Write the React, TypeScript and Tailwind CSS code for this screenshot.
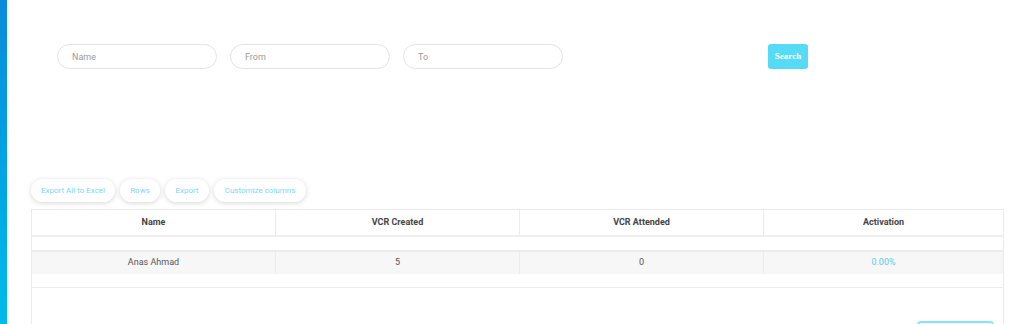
import React from "react";

const cols = ["Name", "VCR Created", "VCR Attended", "Activation"];

const tools = [
  { label: "Export All to Excel", w: "w-[84px]" },
  { label: "Rows", w: "w-[40px]" },
  { label: "Export", w: "w-[44px]" },
  { label: "Customize columns", w: "w-[92px]" },
];

export default function App() {
  return (
    <div className="flex h-[324px] w-[1024px] overflow-hidden bg-white font-['Roboto',sans-serif]">
      <div className="w-[7px] shrink-0 bg-gradient-to-b from-[#0a8bdb] to-[#00bbea]" />

      <div className="flex-1">
        {/* filters */}
        <div className="flex items-center pl-[50px] pt-[44px]">
          {["Name", "From", "To"].map((p) => (
            <input
              key={p}
              placeholder={p}
              className="mr-[13px] h-[25px] w-[160px] rounded-full border border-[#e3e3e3] px-[14px] text-[9px] text-[#555] outline-none placeholder:text-[#9a9a9a]"
            />
          ))}
          <button className="ml-[192px] h-[25px] w-[40px] rounded-[3px] bg-[#55dbf6] font-['Liberation_Serif',serif] text-[9px] font-bold text-white">
            Search
          </button>
        </div>

        {/* toolbar */}
        <div className="mt-[110px] flex gap-[5px] pl-[24px]">
          {tools.map((b) => (
            <button
              key={b.label}
              className={`h-[23px] ${b.w} whitespace-nowrap rounded-full bg-white text-[8px] text-[#7ad8f2] shadow-[0_1px_5px_rgba(0,0,0,0.16)]`}
            >
              {b.label}
            </button>
          ))}
        </div>

        {/* table */}
        <div className="ml-[24px] mr-[20px] mt-[7px] border-x border-t border-[#ebebeb]">
          <div className="grid grid-cols-[244px_244px_244px_1fr] border-b-2 border-[#eeeeee]">
            {cols.map((c, i) => (
              <div
                key={c}
                className={`flex h-[25px] items-center justify-center text-[9px] font-bold text-[#444] ${i < 3 ? "border-r border-[#ececec]" : ""}`}
              >
                {c}
              </div>
            ))}
          </div>
          <div className="h-[13px]" />
          <div className="border-t-2 border-b border-[#ececec]">
            <div className="grid grid-cols-[244px_244px_244px_1fr] bg-[#f7f7f7]">
              {["Anas Ahmad", "5", "0", "0.00%"].map((v, i) => (
                <div
                  key={i}
                  className={`flex h-[22px] items-center justify-center text-[9px] ${i === 3 ? "text-[#5ccbe8]" : "text-[#555]"} ${i < 3 ? "border-r border-[#ececec]" : ""}`}
                >
                  {v}
                </div>
              ))}
            </div>
            <div className="h-[13px]" />
          </div>
          <div className="flex justify-end pr-[9px] pt-[33px]">
            <div className="h-[20px] w-[77px] rounded-[4px] border-2 border-[#86e6f7] bg-white" />
          </div>
        </div>
      </div>
    </div>
  );
}
